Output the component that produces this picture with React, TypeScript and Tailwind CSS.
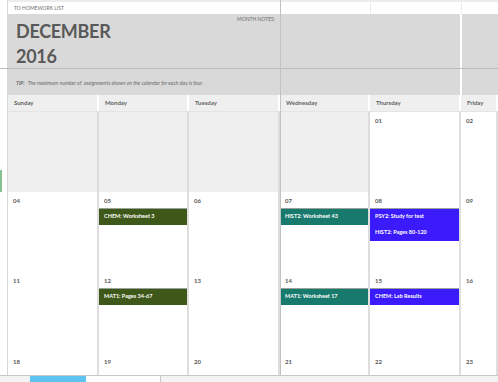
import React from "react";

type Task = { label: string; color: string };
type Day = { num?: string; prev?: boolean; tasks?: Task[] };

const OLIVE = "bg-[#3e5819]";
const TEAL = "bg-[#177a6c]";
const BLUE = "bg-[#3b1bfc]";

const days = ["Sunday", "Monday", "Tuesday", "Wednesday", "Thursday", "Friday"];

const weeks: { h: string; cells: Day[] }[] = [
  {
    h: "h-[80px]",
    cells: [
      { prev: true },
      { prev: true },
      { prev: true },
      { prev: true },
      { num: "01" },
      { num: "02" },
    ],
  },
  {
    h: "h-[80px]",
    cells: [
      { num: "04" },
      { num: "05", tasks: [{ label: "CHEM: Worksheet 3", color: OLIVE }] },
      { num: "06" },
      { num: "07", tasks: [{ label: "HIST2: Worksheet 43", color: TEAL }] },
      {
        num: "08",
        tasks: [
          { label: "PSY2: Study for test", color: BLUE },
          { label: "HIST2: Pages 80-120", color: BLUE },
        ],
      },
      { num: "09" },
    ],
  },
  {
    h: "h-[81px]",
    cells: [
      { num: "11" },
      { num: "12", tasks: [{ label: "MAT1: Pages 34-67", color: OLIVE }] },
      { num: "13" },
      { num: "14", tasks: [{ label: "MAT1: Worksheet 17", color: TEAL }] },
      { num: "15", tasks: [{ label: "CHEM: Lab Results", color: BLUE }] },
      { num: "16" },
    ],
  },
  {
    h: "h-[22px]",
    cells: [
      { num: "18" },
      { num: "19" },
      { num: "20" },
      { num: "21" },
      { num: "22" },
      { num: "23" },
    ],
  },
];

const cols = "grid grid-cols-[91px_90px_91px_90px_91px_1fr]";

function Cell({ day }: { day: Day }) {
  if (day.prev) {
    return <div className="bg-[#efefef] border-r-2 border-[#dcdcdc]" />;
  }
  const tasks = day.tasks ?? [];
  const color = tasks[0]?.color;
  return (
    <div className="bg-white border-r-2 border-[#dedede] flex flex-col">
      <div className="h-[16px] pl-[5px] pt-[6px] text-[6px] font-bold text-[#5a5a5a] leading-none">
        {day.num}
      </div>
      {tasks.length > 0 && (
        <div className={`${color} border-t border-[#9aa39a] flex flex-col`}>
          {tasks.map((t) => (
            <div
              key={t.label}
              className="h-[16px] pl-[5px] flex items-center text-[5.5px] font-bold text-white leading-none"
            >
              {t.label}
            </div>
          ))}
        </div>
      )}
    </div>
  );
}

export default function App() {
  return (
    <div className="relative w-[498px] h-[382px] overflow-hidden bg-white font-['Lato','Open_Sans',sans-serif] text-[#595959]">
      <div className="flex h-[375px]">
        {/* row-number gutter */}
        <div className="w-[8px] border-r border-[#d6d6d6] flex flex-col">
          <div className="h-[170px]" />
          <div className="h-[22px] w-[2px] bg-[#86c294]" />
        </div>

        <div className="flex-1 flex flex-col">
          {/* link row */}
          <div className={`${cols} h-[14px] border-t-2 border-[#ececec]`}>
            <div className="col-span-3 pl-[6px] pt-[4px] text-[5px] text-[#6f6f6f] leading-none">
              TO HOMEWORK LIST
            </div>
            <div className="border-l border-[#ececec]" />
            <div className="border-l border-[#ececec]" />
            <div className="border-l border-[#ececec]" />
          </div>

          {/* month banner */}
          <div className="flex h-[81px] bg-[#d9d9d9]">
            <div className="w-[452px] flex flex-col">
              <div className="h-[54px] flex">
                <div className="w-[229px] pl-[8px] pt-[5px]">
                  <div className="text-[18px] font-bold leading-[25px] tracking-[-0.3px] text-[#595959]">
                    DECEMBER
                  </div>
                  <div className="text-[18px] font-bold leading-[25px] tracking-[-0.3px] text-[#595959]">
                    2016
                  </div>
                </div>
                <div className="pt-[3px] text-[5px] text-[#6f6f6f] leading-none">
                  MONTH NOTES:
                </div>
              </div>
              <div className="h-[27px] pl-[8px] pt-[4px] flex items-center text-[5.2px] italic text-[#6a6a6a] leading-none">
                <span className="font-bold mr-[3px]">TIP:</span>
                The maximum number of&nbsp; assignments shown on the calendar for each day is four.
              </div>
            </div>
            <div className="w-[2px] bg-white" />
            <div className="flex-1" />
          </div>

          {/* weekday header */}
          <div className={`${cols} h-[17px] bg-[#efefef] border-b border-[#e4e4e4]`}>
            {days.map((d) => (
              <div
                key={d}
                className="border-r-2 border-white pl-[6px] flex items-center text-[6px] font-bold text-[#5f5f5f] leading-none"
              >
                {d}
              </div>
            ))}
          </div>

          {weeks.map((w, i) => (
            <div key={i} className={`${cols} ${w.h}`}>
              {w.cells.map((c, j) => (
                <Cell key={j} day={c} />
              ))}
            </div>
          ))}
        </div>
      </div>

      {/* sheet tabs */}
      <div className="h-[7px] border-t border-[#c8c8c8] bg-[#f3f3f3] flex">
        <div className="w-[30px]" />
        <div className="w-[56px] bg-[#5ec3f0]" />
        <div className="w-[74px] bg-white" />
        <div className="w-[1px] bg-[#c8c8c8]" />
      </div>

      {/* frozen pane lines */}
      <div className="absolute left-0 right-0 top-[68px] h-px bg-[#bdbdbd]" />
      <div className="absolute top-0 h-[375px] left-[280px] w-px bg-[#c2c2c2]" />
    </div>
  );
}
